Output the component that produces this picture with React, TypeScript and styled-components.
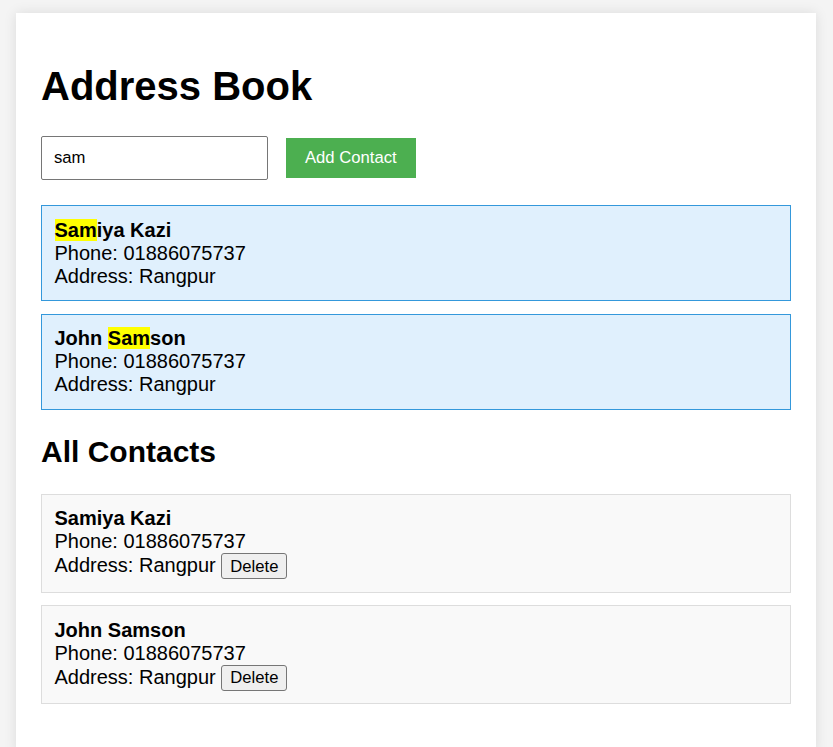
import React, { useState } from 'react';
import styled, { createGlobalStyle } from 'styled-components';

const GlobalStyle = createGlobalStyle`
  html, body {
    margin: 0;
    padding: 0;
    background: #f4f4f4;
    font-family: 'Liberation Sans', Arial, sans-serif;
  }
  body {
    padding: 12.5px 16px;
  }
`;

const Container = styled.div`
  width: 800px;
  box-sizing: border-box;
  padding: 25px;
  background: #fff;
  box-shadow: 0 0 12px rgba(0, 0, 0, 0.1);
  min-height: 740px;
`;

const Title = styled.h1`
  font-size: 40px;
  font-weight: bold;
  margin: 26.8px 0;
  color: #000;
`;

const Toolbar = styled.div`
  display: flex;
  align-items: center;
  gap: 18px;
  margin-bottom: 25px;
`;

const SearchInput = styled.input`
  width: 227px;
  height: 44px;
  box-sizing: border-box;
  padding: 0 12px;
  border: 1px solid #767676;
  border-radius: 2px;
  font-family: 'Liberation Sans', Arial, sans-serif;
  font-size: 16.67px;
  color: #000;
  outline: none;
`;

const AddButton = styled.button`
  height: 40px;
  padding: 0 19px;
  border: none;
  background: #4caf50;
  color: #fff;
  font-family: 'Liberation Sans', Arial, sans-serif;
  font-size: 16.67px;
  cursor: pointer;
`;

const Card = styled.div<{ $match?: boolean }>`
  border: 1px solid ${(p) => (p.$match ? '#3498db' : '#dddddd')};
  background: ${(p) => (p.$match ? '#e0f0fd' : '#f9f9f9')};
  padding: 12.5px;
  margin-bottom: 12.5px;
  font-size: 20px;
  line-height: 23px;
  color: #000;
`;

const Name = styled.div`
  font-weight: bold;
`;

const Mark = styled.span`
  background: #ffff00;
`;

const Subtitle = styled.h2`
  font-size: 30px;
  font-weight: bold;
  margin: 25px 0;
  color: #000;
`;

const DeleteButton = styled.button`
  font-family: 'Liberation Sans', Arial, sans-serif;
  font-size: 16.67px;
  line-height: 19px;
  padding: 2.5px 8px;
  border: 1px solid #767676;
  border-radius: 3px;
  background: #efefef;
  color: #000;
  vertical-align: baseline;
`;

interface IContact {
  name: string;
  phone: string;
  address: string;
}

const initialContacts: IContact[] = [
  { name: 'Samiya Kazi', phone: '01886075737', address: 'Rangpur' },
  { name: 'John Samson', phone: '01886075737', address: 'Rangpur' },
];

function Highlight(props: { text: string; query: string }) {
  const { text, query } = props;
  if (!query) return <>{text}</>;
  const idx = text.toLowerCase().indexOf(query.toLowerCase());
  if (idx < 0) return <>{text}</>;
  return (
    <>
      {text.slice(0, idx)}
      <Mark>{text.slice(idx, idx + query.length)}</Mark>
      {text.slice(idx + query.length)}
    </>
  );
}

export default function App() {
  const [query, setQuery] = useState('sam');
  const [contacts, setContacts] = useState(initialContacts);

  const matches = contacts.filter((c) => query && c.name.toLowerCase().includes(query.toLowerCase()));

  return (
    <>
      <GlobalStyle />
      <Container>
        <Title>Address Book</Title>
        <Toolbar>
          <SearchInput value={query} onChange={(e) => setQuery(e.target.value)} />
          <AddButton>Add Contact</AddButton>
        </Toolbar>
        {matches.map((c, i) => (
          <Card $match key={i}>
            <Name>
              <Highlight text={c.name} query={query} />
            </Name>
            <div>Phone: {c.phone}</div>
            <div>Address: {c.address}</div>
          </Card>
        ))}
        <Subtitle>All Contacts</Subtitle>
        {contacts.map((c, i) => (
          <Card key={i}>
            <Name>{c.name}</Name>
            <div>Phone: {c.phone}</div>
            <div>
              Address: {c.address}{' '}
              <DeleteButton onClick={() => setContacts(contacts.filter((_, j) => j !== i))}>
                Delete
              </DeleteButton>
            </div>
          </Card>
        ))}
      </Container>
    </>
  );
}
